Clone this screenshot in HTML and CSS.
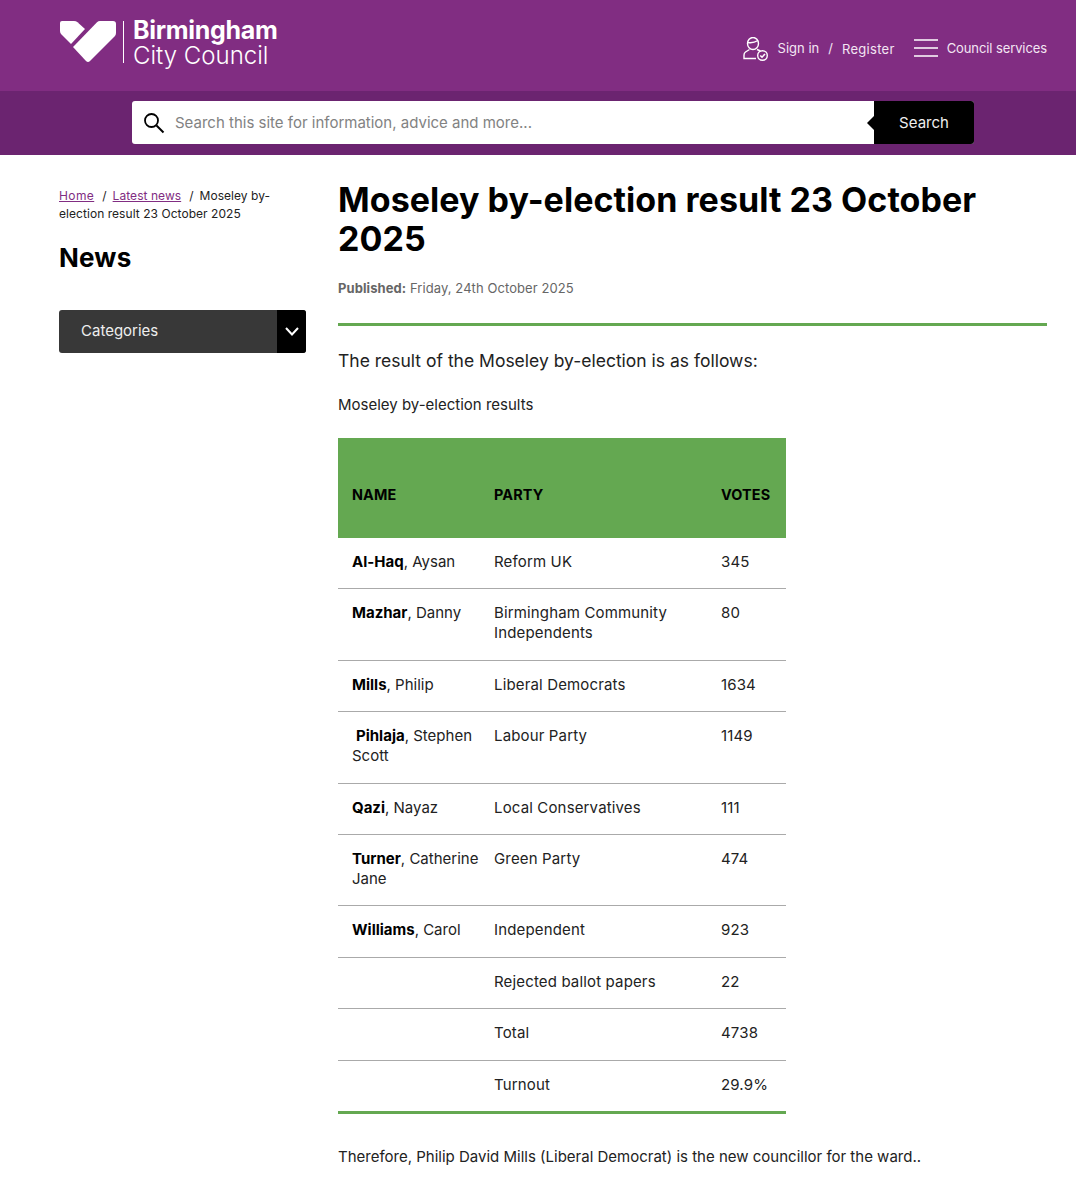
FILE: index.html
```html
<!DOCTYPE html>
<html lang="en">
<head>
  <meta charset="UTF-8" />
  <meta name="viewport" content="width=device-width, initial-scale=1.0"/>
  <title>Moseley by-election result 23 October 2025</title>
  <link rel="stylesheet" href="styles.css">
</head>
<body>

<header class="masthead">
  <a class="logo" href="#">
    <svg class="logo-heart" width="58" height="46" viewBox="0 0 58 46" fill="#fff">
      <path d="M1 4Q1 2 3 2H15Q17 2 18.500 3.200L26 10L12 25L2.500 15.500Q1 14 1 12Z"/>
      <path d="M41 2H54Q57 2 57 5V14Q57 16 55.500 17.500L31 42Q29 44 27 42L14 28L38 3.200Q39.200 2 41 2Z"/>
    </svg>
    <span class="logo-text">
      <span class="logo-top">Birmingham</span>
      <span class="logo-bottom">City Council</span>
    </span>
  </a>
  <nav class="top-nav">
    <svg class="user-icon" width="25" height="24" viewBox="0 0 25 24" fill="none" stroke="#fff" stroke-width="1.400">
      <ellipse cx="10" cy="6.500" rx="5.500" ry="6"/>
      <path d="M4.800 5.500Q10 6.500 15 3.500"/>
      <path d="M6.500 12.500L2.500 15Q1 16 1 18V21.500H13"/>
      <path d="M14 12.500L17.500 14"/>
      <circle cx="19.500" cy="18.500" r="4.800"/>
      <path d="M17.300 18.500L19 20.200L22 17" stroke-width="1.600"/>
    </svg>
    <a class="sign-in" href="#">Sign in</a>
    <span class="slash">/</span>
    <a class="register" href="#">Register</a>
    <svg class="menu-icon" width="24" height="18" viewBox="0 0 24 18" stroke="#fff" stroke-width="1.500">
      <path d="M0 1H24M0 9H24M0 17H24"/>
    </svg>
    <a class="services" href="#">Council services</a>
  </nav>
</header>

<div class="search-band">
  <form class="search-form">
    <svg class="search-icon" width="22" height="22" viewBox="0 0 22 22" fill="none" stroke="#000">
      <circle cx="8.500" cy="8.500" r="6.500" stroke-width="1.800"/>
      <path d="M13.500 13.500L20.500 20.500" stroke-width="2"/>
    </svg>
    <span class="search-hint">Search this site for information, advice and more...</span>
    <button class="search-btn" type="button">Search</button>
  </form>
</div>

<div class="page">
  <aside class="sidebar">
    <p class="crumbs"><a href="#">Home</a><span class="sep">/</span><a href="#">Latest news</a><span class="sep">/</span><span>Moseley by-</span><span>election result 23 October 2025</span></p>
    <h2>News</h2>
    <div class="categories">
      <span class="cat-label">Categories</span>
      <span class="cat-arrow">
        <svg width="14" height="9" viewBox="0 0 14 9" fill="none" stroke="#fff" stroke-width="2"><path d="M1 1L7 7.500L13 1"/></svg>
      </span>
    </div>
  </aside>

  <main class="article">
    <h1>Moseley by-election result 23 October 2025</h1>
    <p class="published"><strong>Published:</strong> Friday, 24th October 2025</p>
    <p class="lead">The result of the Moseley by-election is as follows:</p>
    <p class="caption">Moseley by-election results</p>
    <table class="results">
      <thead>
        <tr><th>Name</th><th>Party</th><th>Votes</th></tr>
      </thead>
      <tbody>
        <tr><td><strong>Al-Haq</strong>, Aysan</td><td>Reform UK</td><td>345</td></tr>
        <tr><td><strong>Mazhar</strong>, Danny</td><td>Birmingham Community Independents</td><td>80</td></tr>
        <tr><td><strong>Mills</strong>, Philip</td><td>Liberal Democrats</td><td>1634</td></tr>
        <tr><td><strong class="pad-name">Pihlaja</strong><span>, Stephen</span> <span>Scott</span></td><td>Labour Party</td><td>1149</td></tr>
        <tr><td><strong>Qazi</strong>, Nayaz</td><td>Local Conservatives</td><td>111</td></tr>
        <tr><td><strong>Turner</strong><span>, Catherine</span> <span>Jane</span></td><td>Green Party</td><td>474</td></tr>
        <tr><td><strong>Williams</strong>, Carol</td><td>Independent</td><td>923</td></tr>
        <tr><td></td><td>Rejected ballot papers</td><td>22</td></tr>
        <tr><td></td><td>Total</td><td>4738</td></tr>
        <tr><td></td><td>Turnout</td><td>29.9%</td></tr>
      </tbody>
    </table>
    <p class="closing">Therefore, Philip David Mills (Liberal Democrat) is the new councillor for the ward..</p>
  </main>
</div>

</body>
</html>
```

FILE: styles.css
```css
* {
  margin: 0;
  padding: 0;
  box-sizing: border-box;
}

body {
  font-family: Inter, "Open Sans", sans-serif;
  font-size: 15px;
  color: #111;
  background: #fff;
  height: 1200px;
  overflow: hidden;
}

a {
  color: inherit;
  text-decoration: none;
}

.masthead {
  height: 91px;
  background: #812d82;
  color: #fff;
  display: flex;
  align-items: flex-start;
  justify-content: space-between;
  padding: 19px 29px 0 59px;
}

.logo {
  display: flex;
  align-items: flex-start;
}

.logo-heart {
  flex: none;
}

.logo-text {
  display: flex;
  flex-direction: column;
  margin: 2px 0 0 6px;
  padding-left: 9px;
  border-left: 1px solid #fff;
  height: 42px;
  line-height: 23px;
}

.logo-top {
  font-size: 25px;
  font-weight: 700;
  letter-spacing: -0.3px;
  margin-top: -2px;
}

.logo-bottom {
  font-size: 24px;
  font-weight: 300;
  margin-top: 2px;
}

.top-nav {
  display: flex;
  align-items: center;
  margin-top: 16px;
  font-size: 13px;
  color: #f3e6f3;
}

.user-icon {
  margin-top: 2px;
}

.sign-in {
  margin-left: 10px;
}

.slash {
  margin: 0 9px 0 9px;
}

.register {
  letter-spacing: 0.3px;
  margin-top: 2px;
}

.menu-icon {
  margin: 0 9px 0 19px;
}

.services {
  letter-spacing: -0.1px;
}

.search-band {
  height: 64px;
  background: #6b2470;
  padding: 10px 0 0 132px;
}

.search-form {
  width: 842px;
  height: 43px;
  background: #fff;
  border-radius: 3px;
  display: flex;
  align-items: center;
  position: relative;
  padding-left: 11px;
}

.search-hint {
  margin-left: 10px;
  color: #828282;
  flex: 1;
}

.search-btn {
  width: 100px;
  height: 43px;
  background: #000;
  color: #eee;
  border: 0;
  border-radius: 0 3px 3px 0;
  font-family: inherit;
  font-size: 15px;
  position: relative;
}

.search-btn::before {
  content: "";
  position: absolute;
  left: -7px;
  top: 15px;
  border-style: solid;
  border-width: 7px 7px 7px 0;
  border-color: transparent #000 transparent transparent;
}

.page {
  display: flex;
  padding: 25px 29px 0 59px;
  gap: 32px;
}

.sidebar {
  width: 247px;
  flex: none;
}

.crumbs {
  font-size: 12px;
  line-height: 18px;
  margin-top: 7px;
  letter-spacing: 0.05px;
  color: #222;
}

.crumbs a {
  color: #812d82;
  text-decoration: underline;
}

.crumbs a:first-child {
  letter-spacing: 0.4px;
}

.sep {
  margin: 0 6px 0 8px;
}

.sidebar h2 {
  font-size: 26px;
  font-weight: 700;
  color: #000;
  margin-top: 19px;
  line-height: 32px;
  letter-spacing: 0.2px;
}

.categories {
  margin-top: 36px;
  height: 43px;
  background: #383838;
  color: #eee;
  border-radius: 3px;
  display: flex;
  align-items: center;
  justify-content: space-between;
  padding-left: 22px;
  overflow: hidden;
}

.cat-label {
  margin-bottom: 2px;
}

.cat-arrow {
  width: 29px;
  height: 43px;
  background: #000;
  display: flex;
  align-items: center;
  justify-content: center;
}

.article {
  width: 709px;
  flex: none;
}

.article h1 {
  font-size: 34px;
  line-height: 39px;
  font-weight: 700;
  color: #000;
  letter-spacing: 0.05px;
}

.published {
  font-size: 13px;
  letter-spacing: 0.08px;
  color: #666;
  margin-top: 22px;
  padding-bottom: 27px;
  border-bottom: 3px solid #64a851;
  line-height: 16px;
}

.lead {
  font-size: 17.500px;
  color: #222;
  margin-top: 23px;
  line-height: 24px;
}

.caption {
  margin-top: 21px;
  line-height: 21px;
  color: #222;
}

.results {
  width: 448px;
  margin-top: 23px;
  border-collapse: collapse;
  table-layout: fixed;
  border-bottom: 3px solid #64a851;
  letter-spacing: 0.15px;
}

.results th {
  background: #64a851;
  color: #000;
  height: 100px;
  text-align: left;
  text-transform: uppercase;
  font-size: 14.400px;
  font-weight: 700;
  padding: 12px 14px 0;
}

.results th:nth-child(1) {
  width: 142px;
}

.results th:nth-child(2) {
  width: 227px;
}

.results td {
  vertical-align: top;
  padding: 14px 14px 16.400px;
  line-height: 20px;
  border-bottom: 1px solid #aaa;
  color: #222;
}

.results td:first-child {
  padding-right: 0;
  letter-spacing: 0;
}

.results tr:last-child td {
  border-bottom: 0;
}

.results strong {
  color: #000;
}

.pad-name {
  padding-left: 4px;
}

.closing {
  margin-top: 32px;
  color: #222;
  line-height: 21px;
}
```
